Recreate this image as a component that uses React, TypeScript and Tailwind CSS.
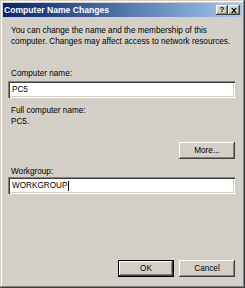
import React from "react";

const font = { fontFamily: '"Liberation Sans", Arial, sans-serif' };

const raised = "shadow-[inset_-1px_-1px_#404040,inset_1px_1px_#fff,inset_-2px_-2px_#808080]";

function Btn({ label, def }: { label: string; def?: boolean }) {
  return (
    <div
      className={
        "w-[56px] h-[17px] flex items-center justify-center text-[8.2px] text-black bg-[#d4d0c8] " +
        (def ? "border border-black " : "") +
        raised
      }
    >
      {label}
    </div>
  );
}

function Field({ value, caret }: { value: string; caret?: boolean }) {
  return (
    <div className="h-[17px] w-[227px] bg-white flex items-center pl-[4px] text-[8.2px] text-black shadow-[inset_1px_1px_#808080,inset_2px_2px_#404040,inset_-1px_-1px_#fff,inset_-2px_-2px_#d4d0c8]">
      <span>{value}</span>
      {caret && <span className="inline-block w-px h-[10px] bg-black" />}
    </div>
  );
}

export default function App() {
  return (
    <div
      className="w-[245px] h-[288px] bg-[#d4d0c8] p-[3px] flex flex-col shadow-[inset_-1px_-1px_#404040,inset_1px_1px_#d4d0c8,inset_-2px_-2px_#808080,inset_2px_2px_#fff]"
      style={font}
    >
      <div className="h-[14px] flex items-center justify-between pl-[1px] pr-[2px] bg-gradient-to-r from-[#0a246a] to-[#a6caf0]">
        <span className="text-[8.6px] font-bold text-white">Computer Name Changes</span>
        <div className="flex">
          <div className={"w-[12px] h-[10px] bg-[#d4d0c8] flex items-center justify-center text-[8px] font-bold leading-none text-black " + raised}>
            ?
          </div>
          <div className={"w-[12px] h-[10px] bg-[#d4d0c8] flex items-center justify-center " + raised}>
            <svg width="6" height="5" viewBox="0 0 8 7">
              <path d="M0 0h2l2 2 2-2h2L5 3.5 8 7H6L4 5 2 7H0l3-3.5z" fill="#000" />
            </svg>
          </div>
        </div>
      </div>
      <div className="flex-1 flex flex-col px-[5px] text-[8.2px] leading-[11px] text-black">
        <p className="mt-[9px] pl-[3px] leading-[10.5px] whitespace-nowrap">
          You can change the name and the membership of this
          <br />
          computer. Changes may affect access to network resources.
        </p>
        <p className="mt-[21px] pl-[3px]">Computer name:</p>
        <div className="mt-[2px]">
          <Field value="PC5" />
        </div>
        <p className="mt-[7px] pl-[3px]">Full computer name:</p>
        <p className="pl-[3px]">PC5.</p>
        <div className="mt-[15px] flex justify-end pr-[2px]">
          <Btn label="More..." />
        </div>
        <p className="mt-[7px] pl-[3px]">Workgroup:</p>
        <div>
          <Field value="WORKGROUP" caret />
        </div>
        <div className="mt-auto mb-[8px] flex justify-end gap-[5px] pr-[2px]">
          <Btn label="OK" def />
          <Btn label="Cancel" />
        </div>
      </div>
    </div>
  );
}
